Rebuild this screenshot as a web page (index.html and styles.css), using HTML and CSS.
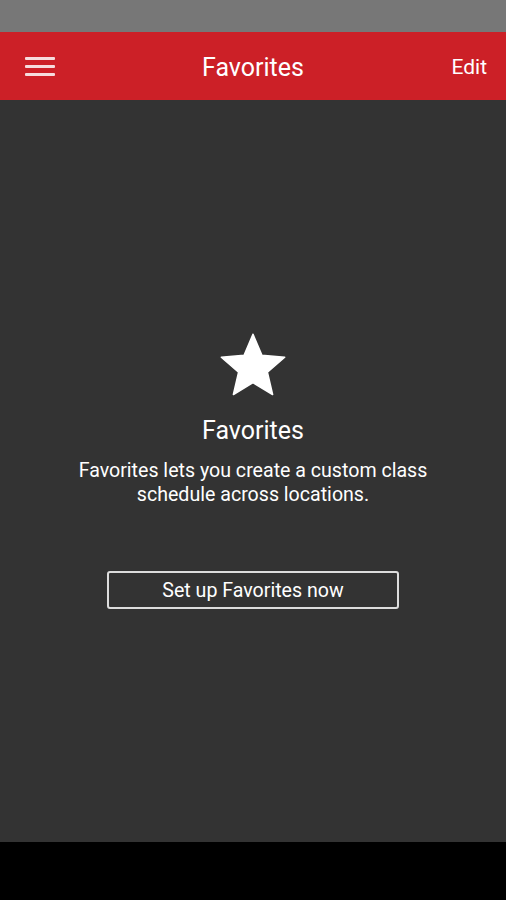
FILE: index.html
```html
<!DOCTYPE html>
<html lang="en">
<head>
  <meta charset="UTF-8" />
  <title>Favorites</title>
  <link rel="stylesheet" href="styles.css">
</head>
<body>
  <div class="statusbar"></div>

  <header class="toolbar">
    <button class="menu" aria-label="Menu">
      <span></span><span></span><span></span>
    </button>
    <h1 class="title">Favorites</h1>
    <button class="edit">Edit</button>
  </header>

  <main class="content">
    <div class="empty">
      <svg class="star" viewBox="0 0 24 24" width="76" height="76">
        <path d="M12 17.27L18.18 21l-1.64-7.03L22 9.24l-7.19-.61L12 2 9.19 8.63 2 9.24l5.46 4.73L5.82 21z" fill="#fff" stroke="#fff" stroke-width="0.5" stroke-linejoin="round"/>
      </svg>
      <h2>Favorites</h2>
      <p>Favorites lets you create a custom class<br>schedule across locations.</p>
      <button class="setup">Set up Favorites now</button>
    </div>
  </main>

  <div class="navbar"></div>
</body>
</html>
```

FILE: styles.css
```css
body {
  margin: 0;
  font-family: Roboto, "Noto Sans", sans-serif;
  background: #000;
  height: 900px;
  display: flex;
  flex-direction: column;
}
.statusbar { height: 32px; background: #777; }
.toolbar {
  box-sizing: border-box;
  height: 68px;
  background: #cc2027;
  display: flex;
  align-items: center;
  justify-content: space-between;
  padding: 2px 19px 0 25px;
  position: relative;
}
.menu {
  background: none;
  border: none;
  padding: 0;
  width: 30px;
  height: 19px;
  margin-top: -2px;
  display: flex;
  flex-direction: column;
  justify-content: space-between;
  cursor: pointer;
}
.menu span {
  display: block;
  height: 3px;
  background: #f6dcdd;
  border-radius: 1px;
}
.title {
  position: absolute;
  left: 0;
  right: 0;
  margin: 0;
  text-align: center;
  font-size: 25px;
  font-weight: 400;
  color: #fff;
  pointer-events: none;
}
.edit {
  background: none;
  border: none;
  padding: 0;
  color: #fff;
  font-family: inherit;
  font-size: 21px;
  cursor: pointer;
}
.content {
  height: 742px;
  background: #333;
  display: flex;
  justify-content: center;
}
.empty {
  padding-top: 228px;
  display: flex;
  flex-direction: column;
  align-items: center;
  color: #fff;
}
.star { display: block; }
.empty h2 {
  margin: 12px 0 0;
  font-size: 25px;
  line-height: 29px;
  font-weight: 400;
}
.empty p {
  margin: 14px 0 0;
  font-size: 19.6px;
  line-height: 24px;
  text-align: center;
}
.setup {
  margin-top: 64px;
  width: 292px;
  height: 38px;
  background: transparent;
  border: 2px solid #ddd;
  border-radius: 3px;
  color: #fff;
  font-family: inherit;
  font-size: 19.6px;
  cursor: pointer;
}
.navbar { flex: 1; background: #000; }
```
